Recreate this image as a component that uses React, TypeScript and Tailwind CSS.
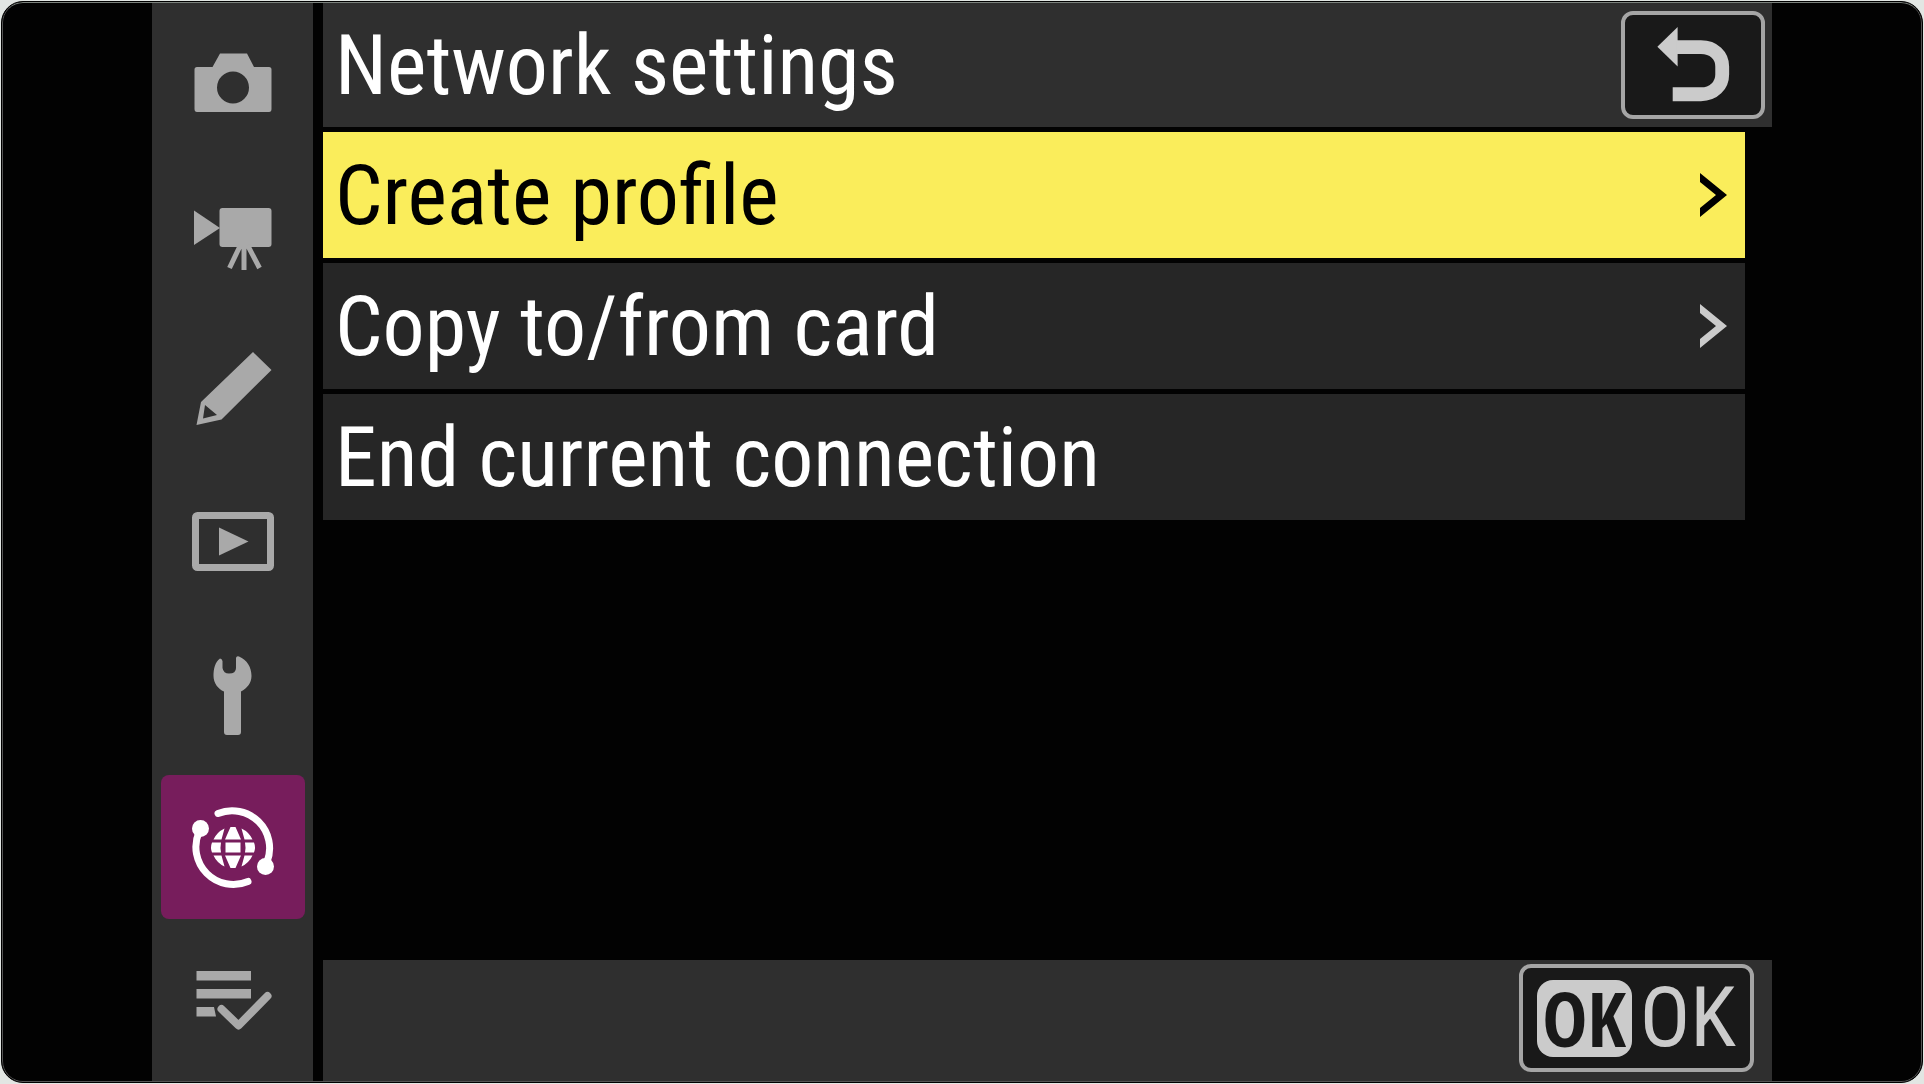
import { useState, type ReactNode } from 'react';

interface MenuTab {
  id: string;
  label: string;
  icon: ReactNode;
}

interface MenuItem {
  id: string;
  label: string;
  hasSubmenu: boolean;
}

const tabs: MenuTab[] = [
  {
    id: 'photo',
    label: 'Photo shooting menu',
    icon: (
      <path
        fill="currentColor"
        fillRule="evenodd"
        d="M12 33H27.5L35 19.5H62L69 33H84Q86.5 33 86.5 35.5V75Q86.5 78 84 78H12Q9.5 78 9.5 75V35.5Q9.5 33 12 33ZM48 37.5A16 16 0 1 0 48 69.5A16 16 0 1 0 48 37.5Z"
      />
    ),
  },
  {
    id: 'video',
    label: 'Video recording menu',
    icon: (
      <>
        <path fill="currentColor" d="M9 23.5L35 41L9 58Z" />
        <rect x="34.5" y="21" width="52" height="39" rx="3" fill="currentColor" />
        <path d="M55.5 58L44.5 81M59 58V83M62.5 58L74.5 81" fill="none" stroke="currentColor" strokeWidth="5" />
      </>
    ),
  },
  {
    id: 'custom',
    label: 'Custom settings menu',
    icon: (
      <path
        fill="currentColor"
        fillRule="evenodd"
        d="M68 12L86.5 30L36.5 79.5L11.5 85L16 62ZM20 65L18 78.5L32 75Z"
      />
    ),
  },
  {
    id: 'playback',
    label: 'Playback menu',
    icon: (
      <>
        <rect x="10.5" y="22.5" width="75" height="52" rx="2" fill="none" stroke="currentColor" strokeWidth="7" />
        <path fill="currentColor" d="M34 34.5L63.5 48.5L34 62.5Z" />
      </>
    ),
  },
  {
    id: 'setup',
    label: 'Setup menu',
    icon: (
      <path
        fill="currentColor"
        d="M35 12.5Q37 12.5 37.5 15V22Q38.5 27.5 44 27.5Q51 27.5 51 22V12Q51.5 9.5 54 10.5C62 14 66.5 21 66.5 30C66.5 37 62 42.5 56 45.5V86Q56 89 53 89H42Q39 89 39 86V45.5C33 43 28.5 37 28.5 30C28.5 23 30 16 35 12.5Z"
      />
    ),
  },
  {
    id: 'network',
    label: 'Network menu',
    icon: (
      <>
        <path
          d="M33 14.5A37.5 37.5 0 0 1 82 63M14 33A37.5 37.5 0 0 0 63 82.5"
          fill="none"
          stroke="currentColor"
          strokeWidth="7"
          strokeLinecap="round"
        />
        <circle cx="15.5" cy="29.5" r="8.5" fill="currentColor" />
        <circle cx="80.5" cy="67.5" r="8.5" fill="currentColor" />
        {/* globe segments */}
        <g fill="currentColor">
          <path d="M45.5 28H50.5L56 40.5H40ZM45.5 69H50.5L56 56.5H40Z" />
          <path d="M39.5 29.5L36.5 40.5H28.5Q32 33 39.5 29.5ZM56.5 29.5L59.5 40.5H67.5Q64 33 56.5 29.5Z" />
          <path d="M39.5 67.5L36.5 56.5H28.5Q32 64 39.5 67.5ZM56.5 67.5L59.5 56.5H67.5Q64 64 56.5 67.5Z" />
          <path d="M27 43.5H36Q35 48.5 36 53.5H27Q25 48.5 27 43.5ZM40.5 43.5H55.5V53.5H40.5ZM60 43.5H69Q71 48.5 69 53.5H60Q61 48.5 60 43.5Z" />
        </g>
      </>
    ),
  },
  {
    id: 'mymenu',
    label: 'My menu',
    icon: (
      <>
        <path fill="currentColor" d="M11.5 19H66V28.5H11.5ZM11.5 37H66V46.5H11.5ZM11.5 55H29L31 64.5H11.5Z" />
        <path
          d="M36.5 57L53.5 73.5L82.5 44"
          fill="none"
          stroke="currentColor"
          strokeWidth="8"
          strokeLinecap="round"
          strokeLinejoin="round"
        />
      </>
    ),
  },
];

const items: MenuItem[] = [
  { id: 'create', label: 'Create profile', hasSubmenu: true },
  { id: 'copy', label: 'Copy to/from card', hasSubmenu: true },
  { id: 'end', label: 'End current connection', hasSubmenu: false },
];

export default function App() {
  const [activeTab, setActiveTab] = useState('network');
  const [activeItem, setActiveItem] = useState('create');

  return (
    <div className="h-screen min-h-[1020px] bg-[#e2e6e3] p-px font-['Roboto_Condensed','Roboto',sans-serif]">
      <div className="h-full overflow-hidden rounded-[22px] border border-black bg-black">
        <div className="flex h-full gap-2.5 overflow-hidden rounded-[21px] border border-[#555] border-t-[#7c827d] bg-[#020202] px-[149px]">
          <nav className="flex w-[161px] shrink-0 flex-col bg-[#2f2f2f] pt-0.5 pb-1">
            {tabs.map((tab) => (
              <div key={tab.id} className="flex flex-1 items-center justify-center">
                <button
                  type="button"
                  aria-label={tab.label}
                  onClick={() => setActiveTab(tab.id)}
                  className={`flex size-36 items-center justify-center rounded-lg ${
                    activeTab === tab.id ? 'bg-[#771d5c] text-white' : 'text-[#a9a9a9]'
                  }`}
                >
                  <svg viewBox="0 0 96 96" className="size-24" aria-hidden="true">
                    {tab.icon}
                  </svg>
                </button>
              </div>
            ))}
          </nav>

          <main className="flex min-w-0 flex-1 flex-col">
            <header className="mb-[5px] flex h-[124px] shrink-0 items-center justify-between bg-[#2f2f2f] pr-[7px] pl-3">
              <h1 className="pt-0.5 text-[84px] leading-[104px] text-white">Network settings</h1>
              <button
                type="button"
                aria-label="Back"
                className="h-27 w-36 rounded-xl border-4 border-[#a5a5a5] bg-[#191919] text-[#cbcbcb]"
              >
                <svg viewBox="4 4 136 101" className="h-full w-full" aria-hidden="true">
                  <path fill="currentColor" d="M36 36L56.5 16V56Z" />
                  <path
                    d="M55 36.5H80C93 36.5 101.5 45 101.5 56V64C101.5 75 93 84 80 84H51.5"
                    fill="none"
                    stroke="currentColor"
                    strokeWidth="14"
                  />
                </svg>
              </button>
            </header>

            <ul className="mr-[27px] flex flex-1 flex-col gap-[5px]">
              {items.map((item) => (
                <li key={item.id}>
                  <button
                    type="button"
                    onClick={() => setActiveItem(item.id)}
                    className={`flex h-[126px] w-full items-center justify-between pr-[18px] pl-3 text-left text-[84px] leading-[104px] ${
                      activeItem === item.id ? 'bg-[#faed5b] text-black' : 'bg-[#262626] text-white'
                    }`}
                  >
                    <span className="pt-0.5">{item.label}</span>
                    {item.hasSubmenu && (
                      <svg
                        viewBox="0 0 28 46"
                        className={`h-[46px] w-7 ${activeItem === item.id ? 'text-black' : 'text-[#cbcbcb]'}`}
                        aria-hidden="true"
                      >
                        <path fill="currentColor" d="M1 1L28 23L1 45V36L17 23L1 10Z" />
                      </svg>
                    )}
                  </button>
                </li>
              ))}
            </ul>

            <footer className="flex h-[121px] shrink-0 items-start justify-end bg-[#2f2f2f] pt-1 pr-[18px]">
              <button
                type="button"
                className="flex h-27 items-center justify-center gap-2 rounded-xl border-4 border-[#a5a5a5] bg-[#191919] px-3.5 text-[#cbcbcb]"
              >
                <span className="flex h-[77px] w-[95px] items-center justify-center rounded-2xl bg-[#cbcbcb] font-['Open_Sans_Condensed','Open_Sans',sans-serif] text-[76px] leading-[72px] font-bold text-[#191919]">
                  OK
                </span>
                <span className="text-[84px] leading-[76px]">OK</span>
              </button>
            </footer>
          </main>
        </div>
      </div>
    </div>
  );
}
